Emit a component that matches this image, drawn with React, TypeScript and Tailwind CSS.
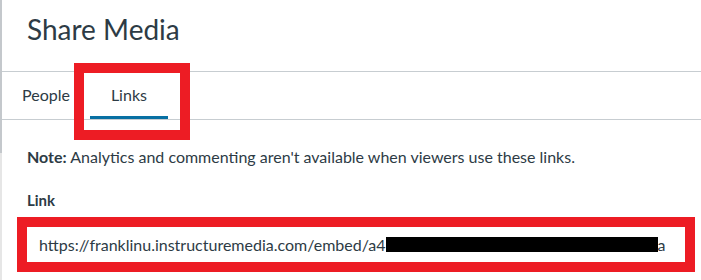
import React from "react";

export default function App() {
  return (
    <div className="w-[701px] h-[280px] bg-white overflow-hidden flex text-[#2d3b45]" style={{ fontFamily: "Lato, 'Noto Sans', sans-serif" }}>
      <div className="w-[2px] flex flex-col shrink-0">
        <div className="h-[153px] bg-[#c4c8cc]" />
        <div className="flex-1 bg-[#e6e6e6]" />
      </div>
      <div className="flex-1 flex flex-col relative">
        <div className="h-[72px] border-b border-[#c7cdd1] pl-[25px] flex items-start">
          <h1 className="text-[28px] leading-none mt-[15px] font-normal">Share Media</h1>
        </div>
        <div className="h-[48px] border-b border-[#c7cdd1] flex items-stretch relative">
          <div className="pl-[20px] pr-[20px] flex items-center text-[16px] pb-[2px]">People</div>
          <div className="relative flex items-center px-[21px] text-[16px] pb-[2px] ml-[0px]">
            <span className="px-[0px]">Links</span>
            <div className="absolute left-0 right-0 bottom-0 h-[3px] bg-[#0770a3]" />
          </div>
        </div>
        <div className="absolute left-[72px] top-[63px] w-[116px] h-[77px] border-[10px] border-[#ed1c24]" />
        <div className="pl-[25px] pt-[27px] text-[16px] leading-[20px]">
          <span className="font-bold">Note:</span> Analytics and commenting aren't available when viewers use these links.
        </div>
        <div className="pl-[25px] pt-[23px] text-[15px] leading-[20px] font-bold">Link</div>
        <div className="ml-[15px] mt-[7px] w-[678px] h-[55px] border-[10px] border-[#ed1c24] flex items-center pl-[12px] text-[16px]">
          <span>https://franklinu.instructuremedia.com/embed/a4</span>
          <span className="inline-block w-[272px] h-[15px] bg-black" />
          <span>a</span>
        </div>
      </div>
    </div>
  );
}
